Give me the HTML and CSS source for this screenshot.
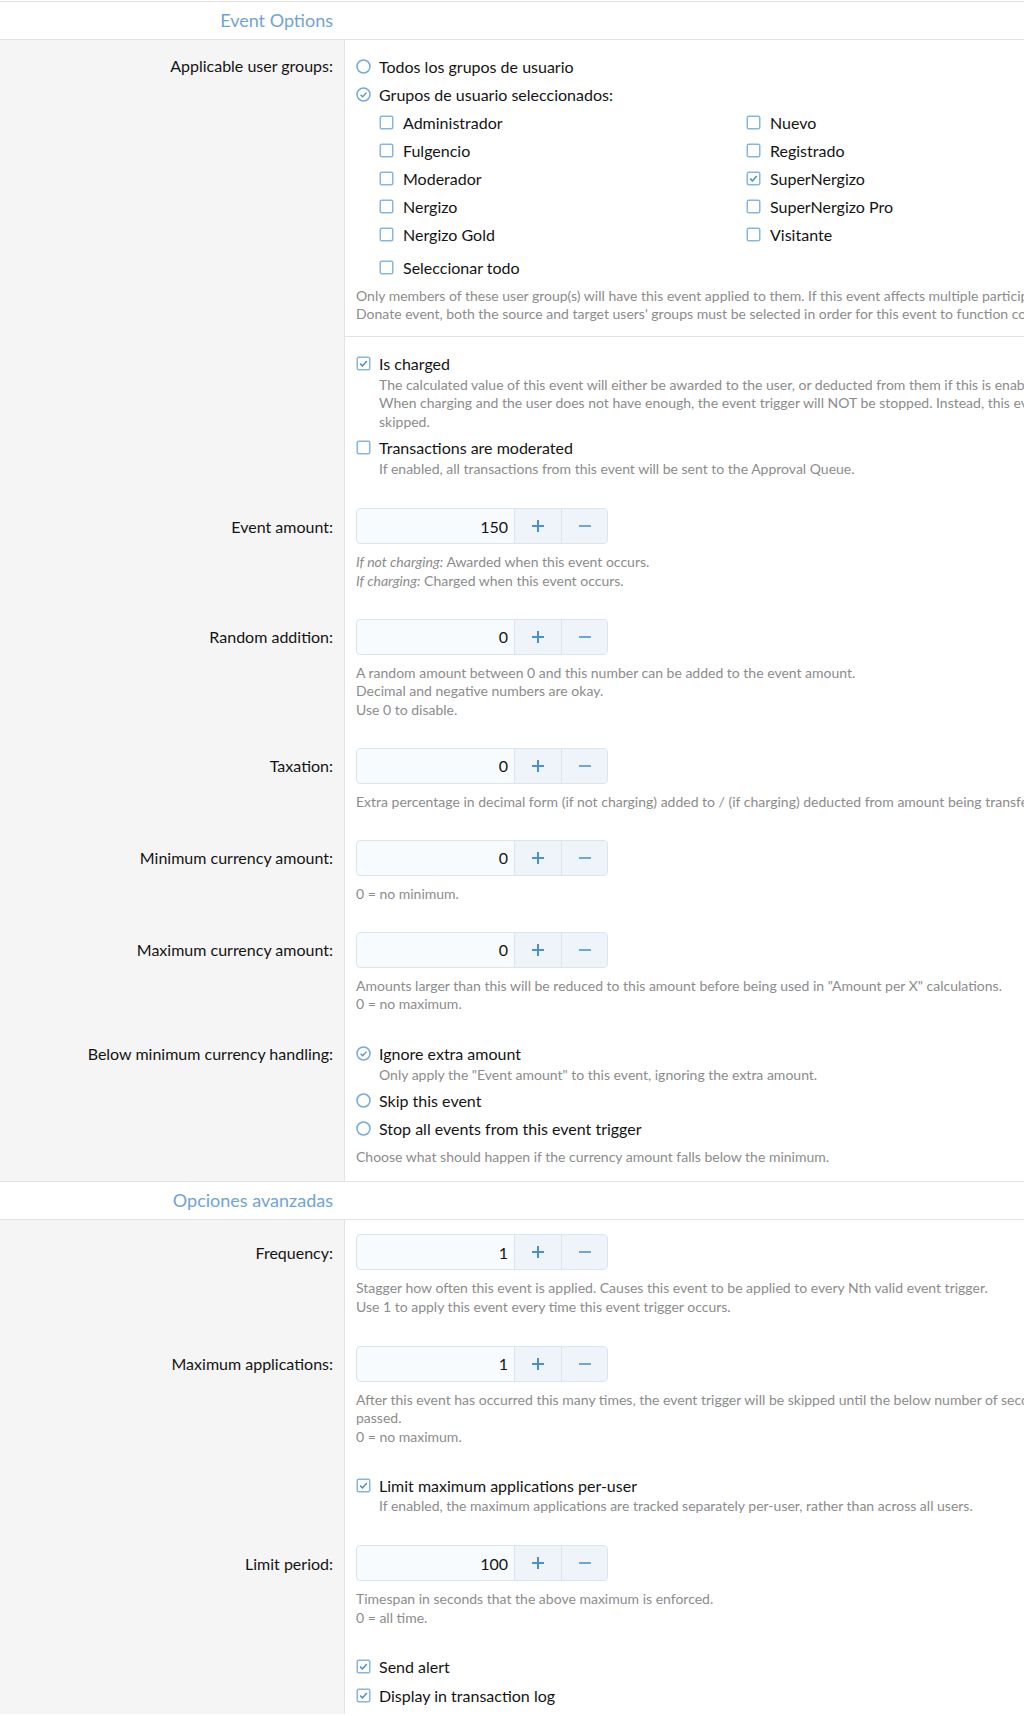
FILE: index.html
```html
<!DOCTYPE html>
<html lang="es">
<head>
    <meta charset="UTF-8">
    <meta name="viewport" content="width=device-width, initial-scale=1.0">
    <title>Event Options</title>
    <link rel="stylesheet" href="styles.css">
</head>
<body>

<!-- Iconos de casillas y radios -->
<svg class="sprites" xmlns="http://www.w3.org/2000/svg">
    <symbol id="cb-off" viewBox="0 0 15 15">
        <rect x="1.25" y="1.25" width="12.5" height="12.5" rx="1.5" fill="#fff" stroke="#86b6e2" stroke-width="1.5"/>
    </symbol>
    <symbol id="cb-on" viewBox="0 0 15 15">
        <rect x="1.25" y="1.25" width="12.5" height="12.5" rx="1.5" fill="#fff" stroke="#86b6e2" stroke-width="1.5"/>
        <polyline points="4.2,7.6 6.5,9.9 10.8,5" fill="none" stroke="#4b8ecf" stroke-width="1.5"/>
    </symbol>
    <symbol id="rd-off" viewBox="0 0 15 15">
        <circle cx="7.5" cy="7.5" r="6.5" fill="#fff" stroke="#74aadb" stroke-width="1.5"/>
    </symbol>
    <symbol id="rd-on" viewBox="0 0 15 15">
        <circle cx="7.5" cy="7.5" r="6.5" fill="#fff" stroke="#74aadb" stroke-width="1.5"/>
        <polyline points="4.6,7.7 6.7,9.8 10.5,5.6" fill="none" stroke="#5d93c6" stroke-width="1.4"/>
    </symbol>
    <symbol id="plus" viewBox="0 0 12 12">
        <path d="M6 0v12M0 6h12" stroke="#4a8fd0" stroke-width="2"/>
    </symbol>
    <symbol id="minus" viewBox="0 0 12 12">
        <path d="M0 6h12" stroke="#6da6dc" stroke-width="2"/>
    </symbol>
</svg>

<div class="form">

    <h3 class="section-header"><span>Event Options</span></h3>

    <!-- Grupos de usuario -->
    <dl class="form-row row-groups">
        <dt>Applicable user groups:</dt>
        <dd>
            <div class="choice"><svg class="ico"><use href="#rd-off"/></svg><span>Todos los grupos de usuario</span></div>
            <div class="choice gap"><svg class="ico"><use href="#rd-on"/></svg><span>Grupos de usuario seleccionados:</span></div>
            <div class="group-list">
                <div class="choice sub"><svg class="ico"><use href="#cb-off"/></svg><span>Administrador</span></div>
                <div class="choice sub"><svg class="ico"><use href="#cb-off"/></svg><span>Fulgencio</span></div>
                <div class="choice sub"><svg class="ico"><use href="#cb-off"/></svg><span>Moderador</span></div>
                <div class="choice sub"><svg class="ico"><use href="#cb-off"/></svg><span>Nergizo</span></div>
                <div class="choice sub"><svg class="ico"><use href="#cb-off"/></svg><span>Nergizo Gold</span></div>
                <div class="choice sub"><svg class="ico"><use href="#cb-off"/></svg><span>Nuevo</span></div>
                <div class="choice sub"><svg class="ico"><use href="#cb-off"/></svg><span>Registrado</span></div>
                <div class="choice sub"><svg class="ico"><use href="#cb-on"/></svg><span>SuperNergizo</span></div>
                <div class="choice sub"><svg class="ico"><use href="#cb-off"/></svg><span>SuperNergizo Pro</span></div>
                <div class="choice sub"><svg class="ico"><use href="#cb-off"/></svg><span>Visitante</span></div>
            </div>
            <div class="choice sub select-all"><svg class="ico"><use href="#cb-off"/></svg><span>Seleccionar todo</span></div>
            <div class="explain">Only members of these user group(s) will have this event applied to them. If this event affects multiple participants, such as a Donate event, both the source and target users' groups must be selected in order for this event to function correctly.</div>
        </dd>
    </dl>

    <dl class="form-row row-charged">
        <dt></dt>
        <dd>
            <div class="choice">
                <svg class="ico"><use href="#cb-on"/></svg>
                <div>
                    <div>Is charged</div>
                    <div class="hint">The calculated value of this event will either be awarded to the user, or deducted from them if this is enabled.<br>When charging and the user does not have enough, the event trigger will NOT be stopped. Instead, this event will be skipped.</div>
                </div>
            </div>
            <div class="choice next">
                <svg class="ico"><use href="#cb-off"/></svg>
                <div>
                    <div>Transactions are moderated</div>
                    <div class="hint">If enabled, all transactions from this event will be sent to the Approval Queue.</div>
                </div>
            </div>
        </dd>
    </dl>

    <dl class="form-row form-row--number">
        <dt>Event amount:</dt>
        <dd>
            <div class="num">
                <input class="num-value" type="text" value="150">
                <button class="num-btn"><svg><use href="#plus"/></svg></button>
                <button class="num-btn"><svg><use href="#minus"/></svg></button>
            </div>
            <div class="explain"><i>If not charging:</i> Awarded when this event occurs.<br><i>If charging:</i> Charged when this event occurs.</div>
        </dd>
    </dl>

    <dl class="form-row form-row--number">
        <dt>Random addition:</dt>
        <dd>
            <div class="num">
                <input class="num-value" type="text" value="0">
                <button class="num-btn"><svg><use href="#plus"/></svg></button>
                <button class="num-btn"><svg><use href="#minus"/></svg></button>
            </div>
            <div class="explain">A random amount between 0 and this number can be added to the event amount.<br>Decimal and negative numbers are okay.<br>Use 0 to disable.</div>
        </dd>
    </dl>

    <dl class="form-row form-row--number">
        <dt>Taxation:</dt>
        <dd>
            <div class="num">
                <input class="num-value" type="text" value="0">
                <button class="num-btn"><svg><use href="#plus"/></svg></button>
                <button class="num-btn"><svg><use href="#minus"/></svg></button>
            </div>
            <div class="explain">Extra percentage in decimal form (if not charging) added to / (if charging) deducted from amount being transferred.</div>
        </dd>
    </dl>

    <dl class="form-row form-row--number">
        <dt>Minimum currency amount:</dt>
        <dd>
            <div class="num">
                <input class="num-value" type="text" value="0">
                <button class="num-btn"><svg><use href="#plus"/></svg></button>
                <button class="num-btn"><svg><use href="#minus"/></svg></button>
            </div>
            <div class="explain">0 = no minimum.</div>
        </dd>
    </dl>

    <dl class="form-row form-row--number">
        <dt>Maximum currency amount:</dt>
        <dd>
            <div class="num">
                <input class="num-value" type="text" value="0">
                <button class="num-btn"><svg><use href="#plus"/></svg></button>
                <button class="num-btn"><svg><use href="#minus"/></svg></button>
            </div>
            <div class="explain">Amounts larger than this will be reduced to this amount before being used in "Amount per X" calculations.<br>0 = no maximum.</div>
        </dd>
    </dl>

    <dl class="form-row row-below">
        <dt>Below minimum currency handling:</dt>
        <dd>
            <div class="choice">
                <svg class="ico"><use href="#rd-on"/></svg>
                <div>
                    <div>Ignore extra amount</div>
                    <div class="hint">Only apply the "Event amount" to this event, ignoring the extra amount.</div>
                </div>
            </div>
            <div class="choice next"><svg class="ico"><use href="#rd-off"/></svg><span>Skip this event</span></div>
            <div class="choice gap"><svg class="ico"><use href="#rd-off"/></svg><span>Stop all events from this event trigger</span></div>
            <div class="explain">Choose what should happen if the currency amount falls below the minimum.</div>
        </dd>
    </dl>

    <h3 class="section-header"><span>Opciones avanzadas</span></h3>

    <dl class="form-row form-row--number">
        <dt>Frequency:</dt>
        <dd>
            <div class="num">
                <input class="num-value" type="text" value="1">
                <button class="num-btn"><svg><use href="#plus"/></svg></button>
                <button class="num-btn"><svg><use href="#minus"/></svg></button>
            </div>
            <div class="explain">Stagger how often this event is applied. Causes this event to be applied to every Nth valid event trigger.<br>Use 1 to apply this event every time this event trigger occurs.</div>
        </dd>
    </dl>

    <dl class="form-row form-row--number row-loose">
        <dt>Maximum applications:</dt>
        <dd>
            <div class="num">
                <input class="num-value" type="text" value="1">
                <button class="num-btn"><svg><use href="#plus"/></svg></button>
                <button class="num-btn"><svg><use href="#minus"/></svg></button>
            </div>
            <div class="explain">After this event has occurred this many times, the event trigger will be skipped until the below number of seconds has passed.<br>0 = no maximum.</div>
        </dd>
    </dl>

    <dl class="form-row">
        <dt></dt>
        <dd>
            <div class="choice">
                <svg class="ico"><use href="#cb-on"/></svg>
                <div>
                    <div>Limit maximum applications per-user</div>
                    <div class="hint">If enabled, the maximum applications are tracked separately per-user, rather than across all users.</div>
                </div>
            </div>
        </dd>
    </dl>

    <dl class="form-row form-row--number row-loose">
        <dt>Limit period:</dt>
        <dd>
            <div class="num">
                <input class="num-value" type="text" value="100">
                <button class="num-btn"><svg><use href="#plus"/></svg></button>
                <button class="num-btn"><svg><use href="#minus"/></svg></button>
            </div>
            <div class="explain">Timespan in seconds that the above maximum is enforced.<br>0 = all time.</div>
        </dd>
    </dl>

    <dl class="form-row row-last">
        <dt></dt>
        <dd>
            <div class="choice"><svg class="ico"><use href="#cb-on"/></svg><span>Send alert</span></div>
            <div class="choice wide-gap"><svg class="ico"><use href="#cb-on"/></svg><span>Display in transaction log</span></div>
        </dd>
    </dl>

</div>

</body>
</html>
```

FILE: styles.css
```css
/* Colores del panel */
:root {
    --color-texto: #141414;
    --color-muted: #8c8c8c;
    --color-borde: #e3e3e3;
    --color-lateral: #f5f5f5;
    --color-titulo: #6fa4d4;
    --color-caja: #f8fbfe;
    --color-caja-borde: #dce4ec;
    --color-boton: #eef4fa;
}

body {
    margin: 0;
    padding: 0;
    overflow: hidden;
    background-color: #fff;
    color: var(--color-texto);
    font-family: 'Lato', 'Liberation Sans', sans-serif;
    font-size: 16px;
}

.sprites {
    display: none;
}

.form {
    width: 1129px;
    padding-top: 1px;
}

/* Cabeceras de seccion */
.section-header {
    display: grid;
    grid-template-columns: 333px 1fr;
    margin: 0;
    height: 37px;
    line-height: 37px;
    border-top: 1px solid var(--color-borde);
    border-bottom: 1px solid var(--color-borde);
    font-size: 18px;
    font-weight: normal;
    color: var(--color-titulo);
    text-align: right;
}

/* Filas del formulario */
.form-row {
    display: grid;
    grid-template-columns: 345px 1fr;
    margin: 0;
}

.form-row dt {
    box-sizing: border-box;
    background-color: var(--color-lateral);
    border-right: 1px solid var(--color-borde);
    padding: 14.5px 11px 0 0;
    text-align: right;
    line-height: 21px;
}

.form-row dd {
    margin: 0;
    padding: 14.5px 11px 14px 11px;
    line-height: 21px;
}

.form-row--number dt {
    padding-top: 22px;
}

.row-groups dd {
    padding-top: 15.5px;
    padding-bottom: 12px;
}

.row-groups dt {
    padding-top: 15px;
}

.row-charged dd {
    border-top: 1px solid var(--color-borde);
    padding-top: 16.5px;
    padding-bottom: 15.5px;
}

.row-below dd {
    padding-top: 15.5px;
    padding-bottom: 14px;
}

.row-below dt {
    padding-top: 15.5px;
}

.row-loose dd {
    padding-top: 15.5px;
}

.row-loose dt {
    padding-top: 23px;
}

.row-last dd {
    padding-bottom: 8px;
}

/* Casillas y radios */
.choice {
    display: flex;
    align-items: flex-start;
}

.choice .ico {
    flex: none;
    width: 15px;
    height: 15px;
    margin-top: 3px;
    margin-right: 8px;
}

.choice.sub .ico {
    margin-right: 9px;
}

.choice.gap {
    margin-top: 7px;
}

.choice.next {
    margin-top: 6px;
}

.choice.wide-gap {
    margin-top: 8px;
}

.group-list {
    display: grid;
    grid-template-columns: 367px 1fr;
    grid-template-rows: repeat(5, 21px);
    grid-auto-flow: column;
    row-gap: 7px;
    margin: 7px 0 0 23px;
}

.select-all {
    margin: 12px 0 0 23px;
}

.hint {
    margin-top: 1.5px;
    font-size: 14px;
    line-height: 18.5px;
    color: var(--color-muted);
}

.explain {
    margin-top: 9px;
    font-size: 14px;
    line-height: 18.5px;
    color: var(--color-muted);
}

/* Caja numerica con botones */
.num {
    display: flex;
    box-sizing: border-box;
    width: 252px;
    height: 36px;
    border: 1px solid var(--color-caja-borde);
    border-radius: 4px;
    background-color: var(--color-caja);
    overflow: hidden;
}

.num-value {
    box-sizing: border-box;
    width: 157px;
    margin: 0;
    padding: 0 6px 0 0;
    border: none;
    background: transparent;
    text-align: right;
    font-family: 'Lato', 'Liberation Sans', sans-serif;
    font-size: 16px;
    color: var(--color-texto);
}

.num-btn {
    display: flex;
    align-items: center;
    justify-content: center;
    width: 47px;
    padding: 0;
    border: none;
    border-left: 1px solid var(--color-caja-borde);
    background-color: var(--color-boton);
    cursor: pointer;
}

.num-btn + .num-btn {
    width: 46px;
}

.num-btn svg {
    width: 12px;
    height: 12px;
}
```
